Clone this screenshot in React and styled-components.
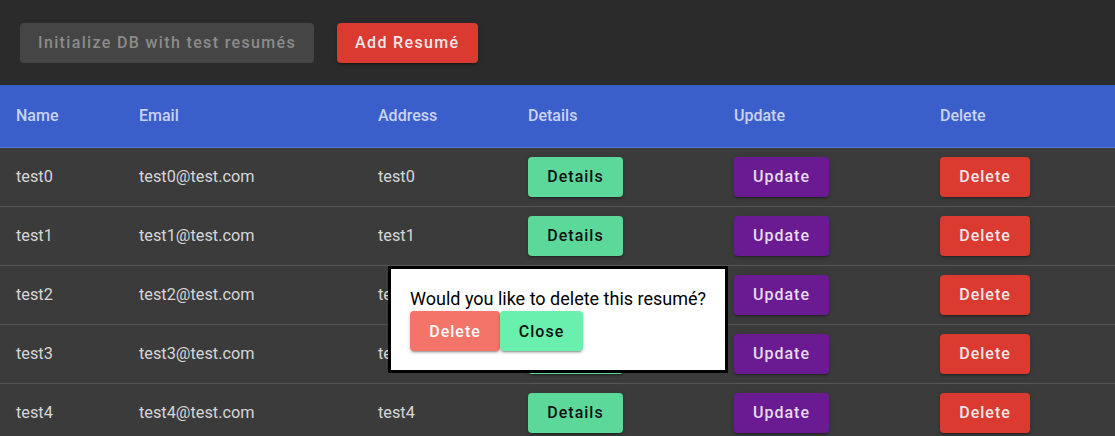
import React from "react";
import styled, { createGlobalStyle } from "styled-components";

const GlobalStyle = createGlobalStyle`
  html, body {
    margin: 0;
    padding: 0;
    background: #3b3b3b;
    font-family: Roboto, "Liberation Sans", sans-serif;
  }
`;

const resumes = [0, 1, 2, 3, 4].map((i) => ({
  name: `test${i}`,
  email: `test${i}@test.com`,
  address: `test${i}`,
}));

const columns = [
  { label: "Name", width: 123 },
  { label: "Email", width: 239 },
  { label: "Address", width: 150 },
  { label: "Details", width: 206 },
  { label: "Update", width: 206 },
  { label: "Delete" },
];

const colors = {
  red: { bg: "#da3a2f", fg: "#f1e6ea" },
  purple: { bg: "#6a1b92", fg: "#e6dcee" },
  green: { bg: "#5cd89b", fg: "#111" },
  salmon: { bg: "#f47469", fg: "#fff" },
  mint: { bg: "#69f0ae", fg: "#111" },
  disabled: { bg: "#454545", fg: "#8c8c8c" },
};

export default function App() {
  return (
    <Page>
      <GlobalStyle />
      <Toolbar>
        <Button $kind="disabled" $wide>
          Initialize DB with test resumés
        </Button>
        <Button $kind="red" $wide>
          Add Resumé
        </Button>
      </Toolbar>

      <Table>
        <thead>
          <HeadRow>
            {columns.map((c) => (
              <HeadCell key={c.label} $w={c.width}>
                {c.label}
              </HeadCell>
            ))}
          </HeadRow>
        </thead>
        <tbody>
          {resumes.map((r) => (
            <Row key={r.name}>
              <Cell>{r.name}</Cell>
              <Cell>{r.email}</Cell>
              <Cell>{r.address}</Cell>
              <Cell>
                <Button $kind="green">Details</Button>
              </Cell>
              <Cell>
                <Button $kind="purple">Update</Button>
              </Cell>
              <Cell>
                <Button $kind="red" $narrow>
                  Delete
                </Button>
              </Cell>
            </Row>
          ))}
        </tbody>
      </Table>

      <Dialog>
        <DialogText>Would you like to delete this resumé?</DialogText>
        <DialogActions>
          <Button $kind="salmon" $narrow>
            Delete
          </Button>
          <Button $kind="mint" $narrow>
            Close
          </Button>
        </DialogActions>
      </Dialog>
    </Page>
  );
}

const Page = styled.div`
  position: relative;
  width: 1115px;
  height: 436px;
  overflow: hidden;
  background: #3b3b3b;
`;

const Toolbar = styled.div`
  display: flex;
  align-items: center;
  gap: 23px;
  height: 85px;
  padding: 0 20px;
  box-sizing: border-box;
  background: #2b2b2b;
`;

const Button = styled.button`
  display: inline-flex;
  align-items: center;
  justify-content: center;
  box-sizing: border-box;
  height: 40px;
  width: ${(p) => (p.$wide ? "auto" : p.$narrow ? "90px" : "95px")};
  padding: 0 ${(p) => (p.$wide ? "18px" : "0")};
  border: none;
  border-radius: 4px;
  font-family: Roboto, "Liberation Sans", sans-serif;
  font-size: 16px;
  font-weight: 500;
  letter-spacing: ${(p) => (p.$wide ? "1.35px" : "1px")};
  background: ${(p) => colors[p.$kind].bg};
  color: ${(p) => colors[p.$kind].fg};
  box-shadow: ${(p) =>
    p.$kind === "disabled"
      ? "none"
      : "0 3px 1px -2px rgba(0,0,0,0.2), 0 2px 2px 0 rgba(0,0,0,0.14), 0 1px 5px 0 rgba(0,0,0,0.12)"};
  cursor: pointer;
`;

const Table = styled.table`
  width: 100%;
  border-collapse: collapse;
  table-layout: fixed;
`;

const HeadRow = styled.tr`
  height: 62px;
  background: #3a5fca;
  border-bottom: 1px solid #5a7ad8;
`;

const HeadCell = styled.th`
  box-sizing: border-box;
  width: ${(p) => (p.$w ? `${p.$w}px` : "auto")};
  padding: 0 16px;
  text-align: left;
  font-size: 16px;
  font-weight: 500;
  color: #cbd3f2;
`;

const Row = styled.tr`
  height: 59px;
  border-bottom: 1px solid #555;
`;

const Cell = styled.td`
  padding: 0 16px;
  font-size: 16.3px;
  color: #d6d6d6;
`;

const Dialog = styled.div`
  position: absolute;
  left: 388px;
  top: 266px;
  width: 340px;
  height: 107px;
  box-sizing: border-box;
  padding: 17px 12px 17px 19px;
  background: #fff;
  border: 3px solid #000;
`;

const DialogText = styled.div`
  font-size: 18px;
  color: #000;
  line-height: 25px;
  white-space: nowrap;
`;

const DialogActions = styled.div`
  display: flex;

  & > button:last-child {
    width: 83px;
  }
`;
